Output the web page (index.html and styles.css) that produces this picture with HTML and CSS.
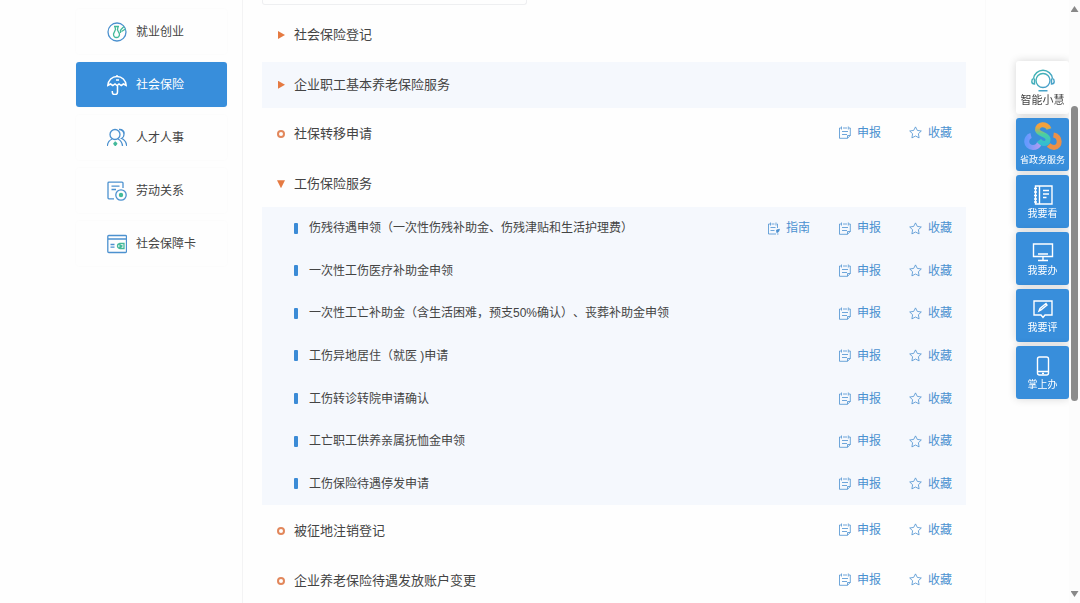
FILE: index.html
```html
<!DOCTYPE html>
<html lang="zh-CN">
<head>
<meta charset="utf-8">
<meta name="viewport" content="width=device-width, initial-scale=1">
<title>社会保险</title>
<link rel="stylesheet" href="styles.css">
</head>
<body>
<svg class="defs" aria-hidden="true">
  <symbol id="form" viewBox="0 0 13 13"><path d="M3 2H1.500V12.300H9.500L12.300 9.500V2H11M5 2H9M3.500 .5V3.500M10.300 .5V3.500M4 5.500H10M4 8.500H9M9.500 12.300V9.500H12.300"/></symbol>
  <symbol id="guide" viewBox="0 0 13 13"><path d="M3 2H1.500V12H9M4.500 2H7.500M10 2H10.500V6M3.500 .5V3.500M9 .5V3.500M3.500 5.500H8.500M3.500 8.500H7.500M10 12H11.500"/><path class="solid" d="M9.500 8L12.500 7.300 11.500 9.800 9.800 10.600Z"/></symbol>
  <symbol id="star" viewBox="0 0 13 13"><path d="M6.500 .9L8.300 4.400 12.300 5 9.400 7.700 10.100 11.900 6.500 10 2.900 11.900 3.600 7.700 .7 5 4.700 4.400Z"/></symbol>
</svg>

<div class="page">
  <nav class="sidebar" aria-label="服务分类">
    <a class="nav-item" href="#"><svg class="nav-icon" viewBox="0 0 20 20"><circle cx="10" cy="10" r="9"/><path class="green" d="M7 4.500H12M8 4.500L8.500 7.500 6.500 12Q6.500 15.500 9.500 15.500T12.500 12L10.500 8 11 4.500M13.500 8L17 4.500M14.500 9.500L18.500 7M13.500 8V11"/></svg>就业创业</a>
    <a class="nav-item active" href="#" aria-current="page"><svg class="nav-icon" viewBox="0 0 20 20"><path d="M.8 10.500C1.200 5 5 1.500 10 1.500S18.800 5 19.200 10.500L16.500 9 14.200 10.500 12 9 10 10.500 8 9 5.800 10.500 3.500 9ZM10 1.500V0M10.500 10V17A2.600 2.600 0 0 1 5.300 17V16M9 5H12"/></svg>社会保险</a>
    <a class="nav-item" href="#"><svg class="nav-icon" viewBox="0 0 20 20"><circle cx="8" cy="6.500" r="5"/><path d="M12.500 1.700A4.700 4.700 0 0 1 14.500 10.500Q19 12 19.800 18M.3 18Q.8 13 5 11M11 11Q15 13 15.500 18M12 1.500Q16.500 1 17.300 5.500"/><path class="green" d="M8.300 13.500V18M6.300 15.700H10.300M7 14.500L9.600 17M9.600 14.500L7 17"/></svg>人才人事</a>
    <a class="nav-item" href="#"><svg class="nav-icon" viewBox="0 0 20 20"><path d="M16 7V2Q16 1.200 15 1.200H2Q1 1.200 1 2V17Q1 17.800 2 17.800H7M4.500 5.200H12.500M4.500 8.500H9"/><circle cx="14" cy="14" r="5.200"/><circle class="green-fill" cx="14" cy="14" r="2.200"/></svg>劳动关系</a>
    <a class="nav-item" href="#"><svg class="nav-icon" viewBox="0 0 20 20"><rect x=".8" y="1.500" width="18.700" height="17" rx="1"/><path d="M1 5H19M3.500 10.500H7.500M3.500 13.200H7.500"/><path class="green" d="M13 9.500H17V14.500H13ZM13 9.500Q10.500 10 10.500 12T13 14.500M14 11V13L15.500 11.500"/></svg>社会保障卡</a>
  </nav>

  <main class="content">
    <div class="panel-end"></div>
    <div class="groups">
      <div class="row"><button class="title" type="button"><i class="mark closed"></i>社会保险登记</button></div>
      <div class="row tinted"><button class="title" type="button"><i class="mark closed"></i>企业职工基本养老保险服务</button></div>
      <div class="row"><span class="title"><i class="mark ring"></i>社保转移申请</span><div class="actions"><a href="#"><svg><use href="#form"/></svg>申报</a><a href="#"><svg><use href="#star"/></svg>收藏</a></div></div>
      <div class="row"><button class="title" type="button" aria-expanded="true"><i class="mark open"></i>工伤保险服务</button></div>
    </div>
    <ul class="services">
      <li><span class="name">伤残待遇申领（一次性伤残补助金、伤残津贴和生活护理费）</span><div class="actions"><a href="#"><svg><use href="#guide"/></svg>指南</a><a href="#"><svg><use href="#form"/></svg>申报</a><a href="#"><svg><use href="#star"/></svg>收藏</a></div></li>
      <li><span class="name">一次性工伤医疗补助金申领</span><div class="actions"><a href="#"><svg><use href="#form"/></svg>申报</a><a href="#"><svg><use href="#star"/></svg>收藏</a></div></li>
      <li><span class="name">一次性工亡补助金（含生活困难，预支50%确认）、丧葬补助金申领</span><div class="actions"><a href="#"><svg><use href="#form"/></svg>申报</a><a href="#"><svg><use href="#star"/></svg>收藏</a></div></li>
      <li><span class="name">工伤异地居住（就医 )申请</span><div class="actions"><a href="#"><svg><use href="#form"/></svg>申报</a><a href="#"><svg><use href="#star"/></svg>收藏</a></div></li>
      <li><span class="name">工伤转诊转院申请确认</span><div class="actions"><a href="#"><svg><use href="#form"/></svg>申报</a><a href="#"><svg><use href="#star"/></svg>收藏</a></div></li>
      <li><span class="name">工亡职工供养亲属抚恤金申领</span><div class="actions"><a href="#"><svg><use href="#form"/></svg>申报</a><a href="#"><svg><use href="#star"/></svg>收藏</a></div></li>
      <li><span class="name">工伤保险待遇停发申请</span><div class="actions"><a href="#"><svg><use href="#form"/></svg>申报</a><a href="#"><svg><use href="#star"/></svg>收藏</a></div></li>
    </ul>
    <div class="more">
      <div class="row"><span class="title"><i class="mark ring"></i>被征地注销登记</span><div class="actions"><a href="#"><svg><use href="#form"/></svg>申报</a><a href="#"><svg><use href="#star"/></svg>收藏</a></div></div>
      <div class="row"><span class="title"><i class="mark ring"></i>企业养老保险待遇发放账户变更</span><div class="actions"><a href="#"><svg><use href="#form"/></svg>申报</a><a href="#"><svg><use href="#star"/></svg>收藏</a></div></div>
    </div>
  </main>
</div>

<aside class="dock" aria-label="快捷服务">
  <a class="tile light" href="#"><svg viewBox="0 0 26 24"><defs><linearGradient id="teal" x2="1" y2="1"><stop stop-color="#3fb6b0"/><stop offset="1" stop-color="#4b9ccf"/></linearGradient></defs><g stroke="url(#teal)"><circle cx="13" cy="12.500" r="7"/><path d="M3.500 10.500A9.600 9.600 0 0 1 22.500 10.500M3.500 10.500Q1.800 11 1.800 13.500T4.500 16V10.500M22.500 10.500Q24.200 11 24.200 13.500T21.500 16V10.500M8.500 22.800L17.500 22.700"/></g></svg>智能小慧</a>
  <a class="tile brand" href="#"><svg viewBox="0 0 38 30"><defs><linearGradient id="sg" x2="0" y2="1"><stop offset=".1" stop-color="#f3a13d"/><stop offset=".5" stop-color="#4bd0a0"/><stop offset="1" stop-color="#35bdd0"/></linearGradient><linearGradient id="pu"><stop stop-color="#659aff"/><stop offset="1" stop-color="#b09bf1"/></linearGradient></defs><path stroke="url(#pu)" d="M7 13.500C1 15 1 25.500 9 25.500C12 25.500 14.500 23.500 15.500 21"/><path stroke="#ec9047" d="M29.500 13C37 14 37 25 30 25.500Q27 25.500 24.500 23"/><path stroke="url(#sg)" d="M25 7C23 1 13 1.500 13.500 8C14 13 25 12 24 18C23.500 22.500 18 22.500 15 18.500"/></svg>省政务服务</a>
  <a class="tile" href="#"><svg viewBox="0 0 22 22"><path d="M3.500 2H20V20H3.500ZM7.500 2V20M11 6.500H17M11 10H17M11 13.500H14.500M2 4.500H5M2 8H5M2 11.500H5M2 15H5M2 18H5"/></svg>我要看</a>
  <a class="tile" href="#"><svg viewBox="0 0 22 22"><path d="M1.500 3H20.500V15.500H1.500ZM6 13H16M11 15.500V19M6 19.500H16"/></svg>我要办</a>
  <a class="tile" href="#"><svg viewBox="0 0 22 22"><path d="M2 3H20V17H13L11 19.500 9 17H2ZM7 13L8 10.500 14 5.500 15 7 9 12Z"/></svg>我要评</a>
  <a class="tile" href="#"><svg viewBox="0 0 22 22"><rect x="5.500" y="2" width="11" height="18" rx="2"/><path d="M6 16.500H16M10 18.500H12"/></svg>掌上办</a>
</aside>
<div class="scrollbar" aria-hidden="true"><i class="arrow up"></i><div class="track"><div class="thumb"></div></div><i class="arrow down"></i></div>
</body>
</html>
```
FILE: styles.css
```css
* { box-sizing: border-box; }
body {
  margin: 0;
  overflow: hidden;
  background: #fefefe;
  color: #444;
  font: 13px/20px "Liberation Sans", "Noto Sans CJK SC", sans-serif;
  text-spacing-trim: space-all;
}
a { color: inherit; text-decoration: none; }
svg { fill: none; stroke: currentColor; }
.defs { position: absolute; width: 0; height: 0; }

.page { display: flex; min-height: 100vh; padding-right: 94px; }

.sidebar {
  flex: 0 0 243px;
  display: flex;
  flex-direction: column;
  gap: 8px;
  padding: 9px 15px 0 76px;
  border-right: 1px solid #f3f3f4;
}
.nav-item {
  display: flex;
  align-items: center;
  gap: 9px;
  height: 45px;
  padding-left: 31px;
  border-radius: 3px;
  font-size: 12px;
  box-shadow: 0 0 2px #f8f8f8;
}
.nav-item.active { background: #388edb; color: #fff; }
.nav-icon { width: 20px; height: 20px; stroke: #4c91cf; stroke-width: 1.3; }
.active .nav-icon { stroke: #fff; stroke-width: 1.5; }
.nav-icon .green { stroke: #43b99a; }
.nav-icon .green-fill { fill: #43b99a; stroke: none; }

.content { flex: 1; min-width: 0; padding: 0 19px; border-right: 1px solid #fafafa; }
.panel-end {
  width: 265px;
  height: 5px;
  margin-bottom: 7px;
  border: 1px solid #eeeff1;
  border-top: 0;
  border-radius: 0 0 3px 3px;
}
.groups { display: grid; grid-template-rows: repeat(4, 1fr); gap: 4px; height: 195px; }
.row { display: flex; align-items: center; justify-content: space-between; min-height: 46px; padding: 0 14px; }
.groups .row { min-height: 0; }
.row.tinted { background: #f5f8fd; }
.row .actions { padding-bottom: 3px; }
.title {
  display: flex;
  align-items: center;
  gap: 8px;
  padding: 0;
  border: 0;
  background: none;
  color: inherit;
  font: inherit;
}
.mark { width: 10px; height: 8px; flex: none; }
.mark.closed { background: #e57a42; clip-path: polygon(20% 0, 90% 50%, 20% 100%); }
.mark.open { background: #e57a42; clip-path: polygon(10% 0, 90% 0, 50% 100%); }
.mark.ring { width: 8px; margin: 0 1px; border: 2px solid #e2875b; border-radius: 50%; }

.services {
  display: grid;
  grid-auto-rows: 1fr;
  height: 298px;
  margin: 0;
  padding: 0;
  list-style: none;
  background: #f5f8fd;
  font-size: 12px;
}
.services li { display: flex; align-items: center; justify-content: space-between; padding: 0 14px 0 32px; }
.name { display: flex; align-items: center; gap: 11px; }
.name::before { content: ""; width: 4px; height: 11px; border-radius: 1px; background: #3b8bd6; }
.actions { display: flex; gap: 28px; color: #4b91d0; font-size: 12px; }
.actions a { display: flex; align-items: center; gap: 6px; }
.actions svg { width: 13px; height: 13px; stroke-width: .8; }
.solid { fill: currentColor; }
.more { display: grid; gap: 4px; padding-top: 3px; }

.dock {
  position: fixed;
  top: 61px;
  right: 11px;
  display: flex;
  flex-direction: column;
  gap: 4px;
}
.tile {
  display: flex;
  flex-direction: column;
  align-items: center;
  justify-content: flex-end;
  width: 53px;
  height: 53px;
  padding-bottom: 6px;
  border-radius: 3px;
  background: #388edb;
  box-shadow: 0 0 9px rgba(0, 0, 0, .16);
  color: #fff;
  font-size: 10px;
  line-height: 16px;
  white-space: nowrap;
}
.tile svg { width: 22px; height: 22px; stroke-width: 1.4; }
.tile.light { background: #fff; color: #444; font-size: 11px; }
.tile.light svg { width: 26px; height: 24px; }
.tile.brand { padding-bottom: 3px; font-size: 9px; }
.tile.brand svg { width: 38px; height: 30px; stroke-width: 5; }

.scrollbar {
  position: fixed;
  top: 0;
  right: 0;
  bottom: 0;
  display: flex;
  flex-direction: column;
  align-items: center;
  width: 11px;
  padding: 6px 0;
  background: #fcfcfc;
}
.arrow { width: 8px; height: 6px; background: #888; }
.arrow.up { clip-path: polygon(50% 0, 100% 100%, 0 100%); }
.arrow.down { clip-path: polygon(0 0, 100% 0, 50% 100%); }
.track { flex: 1; padding-top: 94px; }
.thumb { width: 7px; height: 51%; min-height: 295px; border-radius: 4px; background: #8b8b8b; }
```
